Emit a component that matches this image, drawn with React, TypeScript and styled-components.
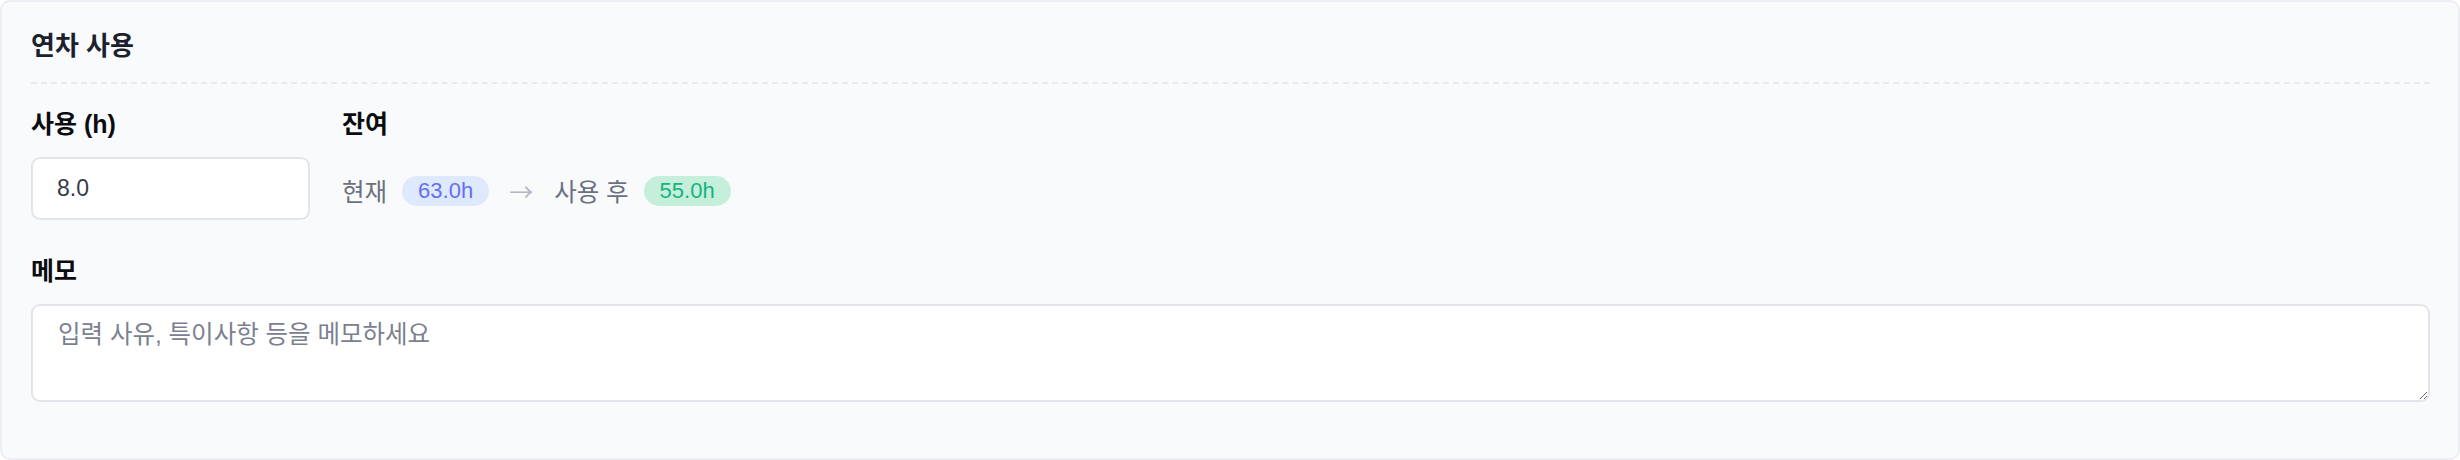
import styled, { createGlobalStyle } from 'styled-components';

const GlobalStyle = createGlobalStyle`
  html, body {
    margin: 0;
    padding: 0;
    background: #ffffff;
  }
  body {
    font-family: 'Liberation Sans', 'Noto Sans CJK KR', sans-serif;
  }
  * {
    box-sizing: border-box;
  }
`;

const leave = {
  current: 63,
  used: 8,
};

const App = () => {
  const after = leave.current - leave.used;
  return (
    <>
      <GlobalStyle />
      <Card>
        <Header>
          <Title>연차 사용</Title>
        </Header>
        <FieldGrid>
          <Field>
            <Label>사용 (h)</Label>
            <Input type='text' defaultValue={leave.used.toFixed(1)} />
          </Field>
          <Field>
            <Label>잔여</Label>
            <Remain>
              <Muted>현재</Muted>
              <Badge tone='blue'>{leave.current.toFixed(1)}h</Badge>
              <Arrow>→</Arrow>
              <Muted>사용 후</Muted>
              <Badge tone='green'>{after.toFixed(1)}h</Badge>
            </Remain>
          </Field>
        </FieldGrid>
        <MemoField>
          <Label>메모</Label>
          <Memo placeholder='입력 사유, 특이사항 등을 메모하세요' />
        </MemoField>
      </Card>
    </>
  );
};

export default App;

const Card = styled.div`
  width: 2460px;
  height: 460px;
  border: 2px solid #eceef3;
  border-radius: 10px;
  background: #f9fafc;
  padding: 28px 28px 0 29px;
  display: flex;
  flex-direction: column;
`;

const Header = styled.div`
  padding-bottom: 19px;
  border-bottom: 2px dashed #e8eaef;
`;

const Title = styled.h2`
  margin: 0;
  font-size: 26px;
  line-height: 33px;
  font-weight: 700;
  color: #1c1f2e;
`;

const FieldGrid = styled.div`
  display: grid;
  grid-template-columns: 279px auto;
  column-gap: 32px;
  margin-top: 25px;
  justify-content: start;
`;

const Field = styled.div`
  display: flex;
  flex-direction: column;
  gap: 18px;
`;

const Label = styled.label`
  font-size: 25px;
  line-height: 30px;
  font-weight: 700;
  color: #0b0c10;
`;

const Input = styled.input`
  width: 100%;
  height: 63px;
  border: 2px solid #e3e5eb;
  border-radius: 9px;
  background: #ffffff;
  padding: 0 24px;
  font-family: inherit;
  font-size: 23px;
  color: #353b48;
  outline: none;
`;

const Remain = styled.div`
  height: 63px;
  display: flex;
  align-items: center;
  gap: 15px;
  padding-top: 4px;
`;

const Muted = styled.span`
  font-size: 24.5px;
  color: #6b7180;
`;

const Arrow = styled.span`
  font-family: 'Noto Sans CJK KR', sans-serif;
  font-size: 24px;
  color: #b3b6c2;
  padding: 0 6px 0 5px;
`;

const Badge = styled.span<{ tone: 'blue' | 'green' }>`
  display: inline-flex;
  align-items: center;
  height: 30px;
  padding: 0 16px;
  border-radius: 15px;
  font-size: 22px;
  background: ${({ tone }) => (tone === 'blue' ? '#dfe9fe' : '#c6efdb')};
  color: ${({ tone }) => (tone === 'blue' ? '#6470f0' : '#12b57f')};
`;

const MemoField = styled.div`
  display: flex;
  flex-direction: column;
  gap: 18px;
  margin-top: 36px;
`;

const Memo = styled.textarea`
  width: 100%;
  height: 98px;
  border: 2px solid #e3e5eb;
  border-radius: 9px;
  background: #ffffff;
  padding: 12px 25px;
  font-family: inherit;
  font-size: 24.5px;
  line-height: 33px;
  color: #353b48;
  outline: none;
  resize: vertical;

  &::placeholder {
    color: #7b8091;
  }
`;
